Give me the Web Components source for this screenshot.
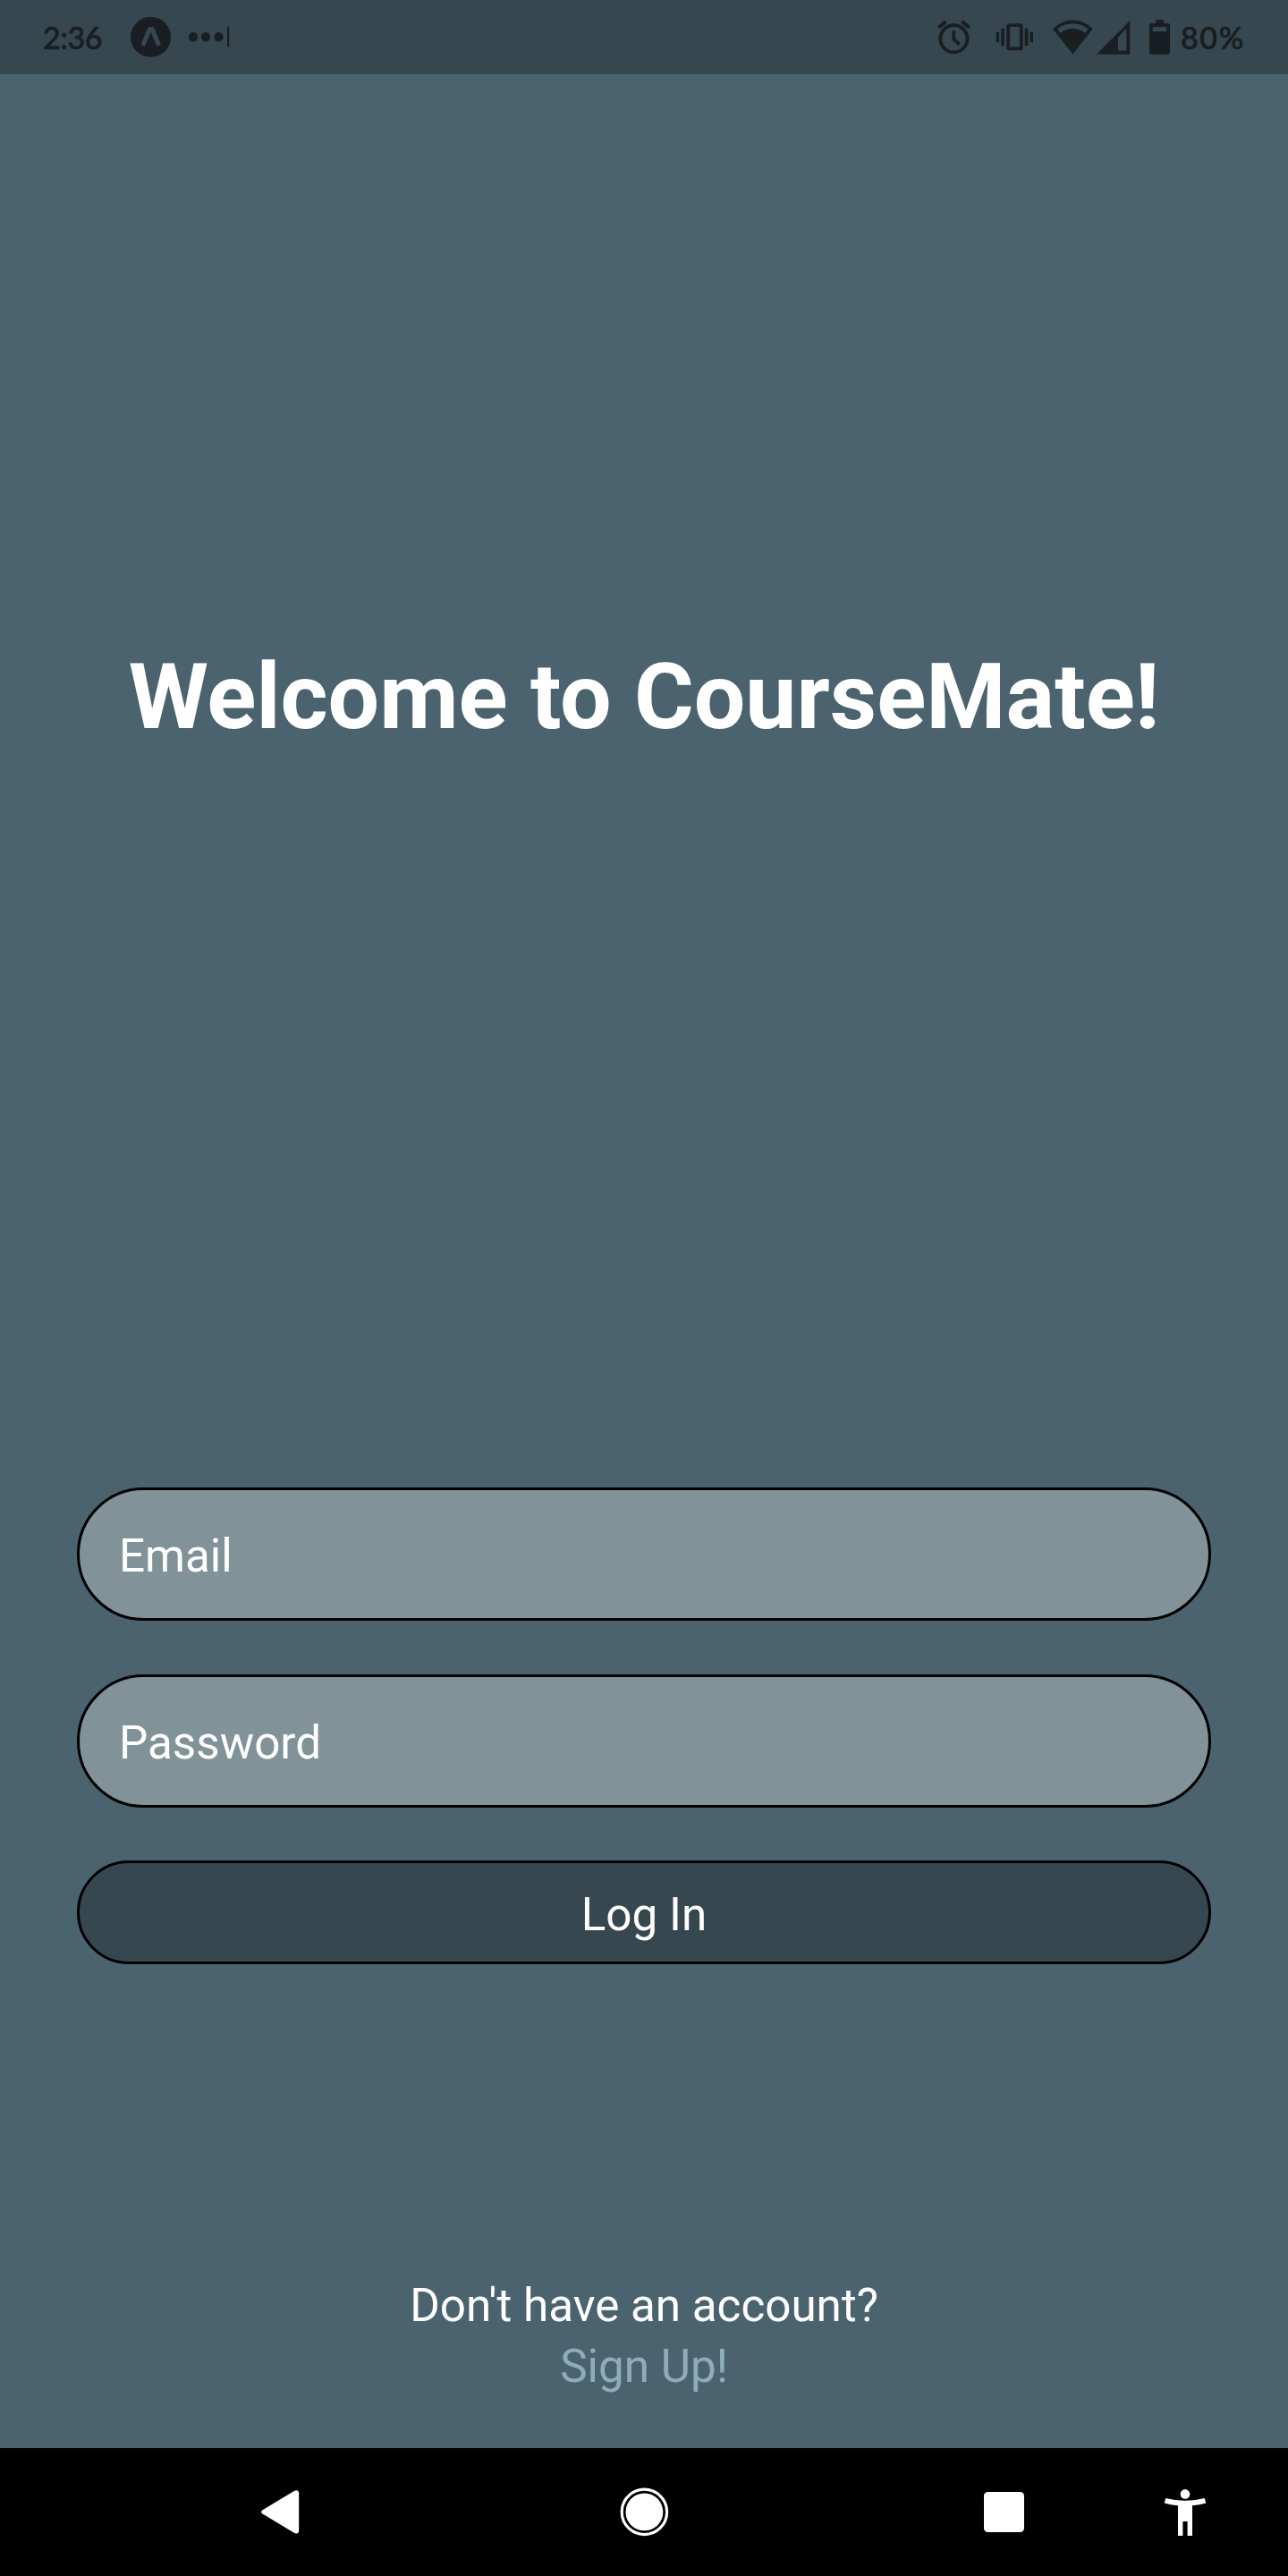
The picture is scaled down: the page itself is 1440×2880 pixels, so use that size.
<!DOCTYPE html>
<html lang="en">
<head>
<meta charset="utf-8">
<title>CourseMate</title>
<style>
html,body{margin:0;padding:0;background:#4b636e}
body{font-family:Roboto,sans-serif}
</style>
</head>
<body>
<course-app></course-app>
<script>
const define = (name, html) => customElements.define(name, class extends HTMLElement {
  constructor() {
    super();
    this.attachShadow({ mode: 'open' }).innerHTML = html;
  }
});

define('status-bar', `
<style>
:host{display:flex;align-items:flex-start;justify-content:space-between;height:83px;box-sizing:border-box;background:#37474f;color:#181e21;font:500 34px/40px Lato,sans-serif;padding:0 48px 0 48px}
.group{display:flex;align-items:flex-start;height:83px}
svg{display:block;fill:currentColor;flex:none}
span{-webkit-text-stroke:.7px currentColor}
.time{width:68px;margin-top:22px;letter-spacing:-.4px;white-space:nowrap}
.pct{width:72px;margin-top:22px;letter-spacing:1.6px;white-space:nowrap}
.cut{fill:#37474f}
.line{fill:none;stroke:currentColor}
</style>
<div class="group">
  <span class="time">2:36</span>
  <svg style="margin-left:28px" width="50" height="83" viewBox="144 0 50 83"><circle cx="168.5" cy="41.3" r="22.5"/><path class="cut" d="M165.7 30.3H172L180 50 175.4 51.8 168.7 36 161.8 51.8 157.3 50Z"/></svg>
  <svg style="margin-left:14px" width="52" height="83" viewBox="208 0 52 83"><ellipse cx="216" cy="41.3" rx="5" ry="5.4"/><ellipse cx="230.1" cy="41.3" rx="5.1" ry="5.4"/><ellipse cx="244.5" cy="41.3" rx="5.1" ry="5.4"/><rect x="254" y="30" width="2.2" height="22.4" rx="1"/></svg>
</div>
<div class="group">
  <svg width="40" height="83" viewBox="1046 0 40 83"><g class="line"><circle cx="1066.4" cy="43.3" r="15.1" stroke-width="3.8"/><path d="M1066.4 34.3V44.2L1072.7 49.7" stroke-width="3.7"/><path d="M1049.6 30.8L1057.4 24.1M1075.5 24.1L1083.5 30.8" stroke-width="4.1"/></g></svg>
  <svg style="margin-left:26px" width="46" height="83" viewBox="1112 0 46 83"><rect class="line" x="1127.2" y="28.2" width="14.6" height="26.2" rx="1.5" stroke-width="3.8"/><path d="M1119.3 31.8h3.6v19.5h-3.6zM1113.6 35.7h3.5v11.6h-3.5zM1145.8 31.8h3.6v19.5h-3.6zM1151.5 35.7h3.5v11.6h-3.5z"/></svg>
  <svg style="margin-left:18px" width="48" height="83" viewBox="1176 0 48 83"><path d="M1199.4 60.5L1177 32.2Q1187 22.6 1199.4 22.6T1221.8 32.2Z"/><path class="cut" d="M1182.2 32.6Q1190 26.3 1199.4 26.3T1216.6 32.6L1213.2 37Q1207 32 1199.4 32T1185.6 37Z"/></svg>
  <svg width="42" height="83" viewBox="1224 0 42 83"><path d="M1226 60.7L1263.3 23.1V60.7Z"/><path class="cut" d="M1250 41.5L1259.3 32.1V56.8H1250Z"/></svg>
  <svg style="margin-left:16px" width="30" height="83" viewBox="1282 0 30 83"><rect x="1285" y="25.9" width="23" height="35" rx="2.8"/><path d="M1292 22h9v5h-9z"/><path class="cut" d="M1288.8 30.2h15.3v5h-15.3z"/></svg>
  <span class="pct" style="margin-left:8px">80%</span>
</div>`);

define('page-title', `
<style>:host{display:block;font:700 102px/120px Roboto,sans-serif;color:#fff;text-align:center;white-space:nowrap}</style><slot></slot>`);

define('text-field', `
<style>:host{display:flex;align-items:center;height:149px;box-sizing:border-box;border:3px solid #000;border-radius:75px;background:#819299;color:#fff;font:400 51.2px/62px Roboto,sans-serif;padding:4px 44px 0}</style><slot></slot>`);

define('pill-button', `
<style>:host{display:flex;align-items:center;justify-content:center;height:116px;box-sizing:border-box;border:3px solid #000;border-radius:58px;background:#37474f;color:#fff;font:400 51.2px/62px Roboto,sans-serif;padding-top:5px}</style><slot></slot>`);

define('signup-prompt', `
<style>:host{display:flex;flex-direction:column;align-items:center;color:#fff;font:400 51.2px/68px Roboto,sans-serif}.link{color:#8eacbb}</style>
<slot></slot><slot class="link" name="link"></slot>`);

define('nav-bar', `
<style>:host{display:flex;height:143px;background:#000}svg{display:block;fill:#fff;flex:none}</style>
<svg style="margin-left:288px" width="50" height="143" viewBox="288 2737 50 143"><path d="M293.2 2806.5L328.8 2784.9Q334.2 2782.4 334.2 2788.2V2828.5Q334.2 2834.2 328.8 2831.7L293.2 2810.3Q291.2 2808.4 293.2 2806.5Z"/></svg>
<svg style="margin-left:352px" width="60" height="143" viewBox="690 2737 60 143"><circle cx="720.4" cy="2808.4" r="25.2" fill="none" stroke="#fff" stroke-width="3.2"/><circle cx="720.4" cy="2808.4" r="20.9"/></svg>
<svg style="margin-left:346px" width="54" height="143" viewBox="1096 2737 54 143"><rect x="1100" y="2786" width="45" height="45" rx="4.5"/></svg>
<svg style="margin-left:150px" width="50" height="143" viewBox="1300 2737 50 143"><circle cx="1325" cy="2788.4" r="5.3"/><path d="M1303.2 2793Q1325 2798.6 1346.8 2793L1348.2 2798.4Q1341 2800.4 1333 2801.2V2835H1327.6V2819H1322.4V2835H1317V2801.2Q1309 2800.4 1301.8 2798.4Z"/></svg>`);

define('course-app', `
<style>
:host{display:flex;flex-direction:column;width:1440px;height:2880px;background:#4b636e;overflow:hidden}
main{flex:1;display:flex;flex-direction:column;min-height:0}
page-title{margin-top:636px;height:120px}
form{display:flex;flex-direction:column;margin:824px 86px 0}
text-field{margin-bottom:60px}
text-field+text-field{margin-bottom:59px}
signup-prompt{margin-top:348px}
</style>
<status-bar></status-bar>
<main>
  <page-title>Welcome to CourseMate!</page-title>
  <form>
    <text-field>Email</text-field>
    <text-field>Password</text-field>
    <pill-button role="button">Log In</pill-button>
  </form>
  <signup-prompt>Don't have an account?<span slot="link">Sign Up!</span></signup-prompt>
</main>
<nav-bar></nav-bar>`);
</script>
</body>
</html>
